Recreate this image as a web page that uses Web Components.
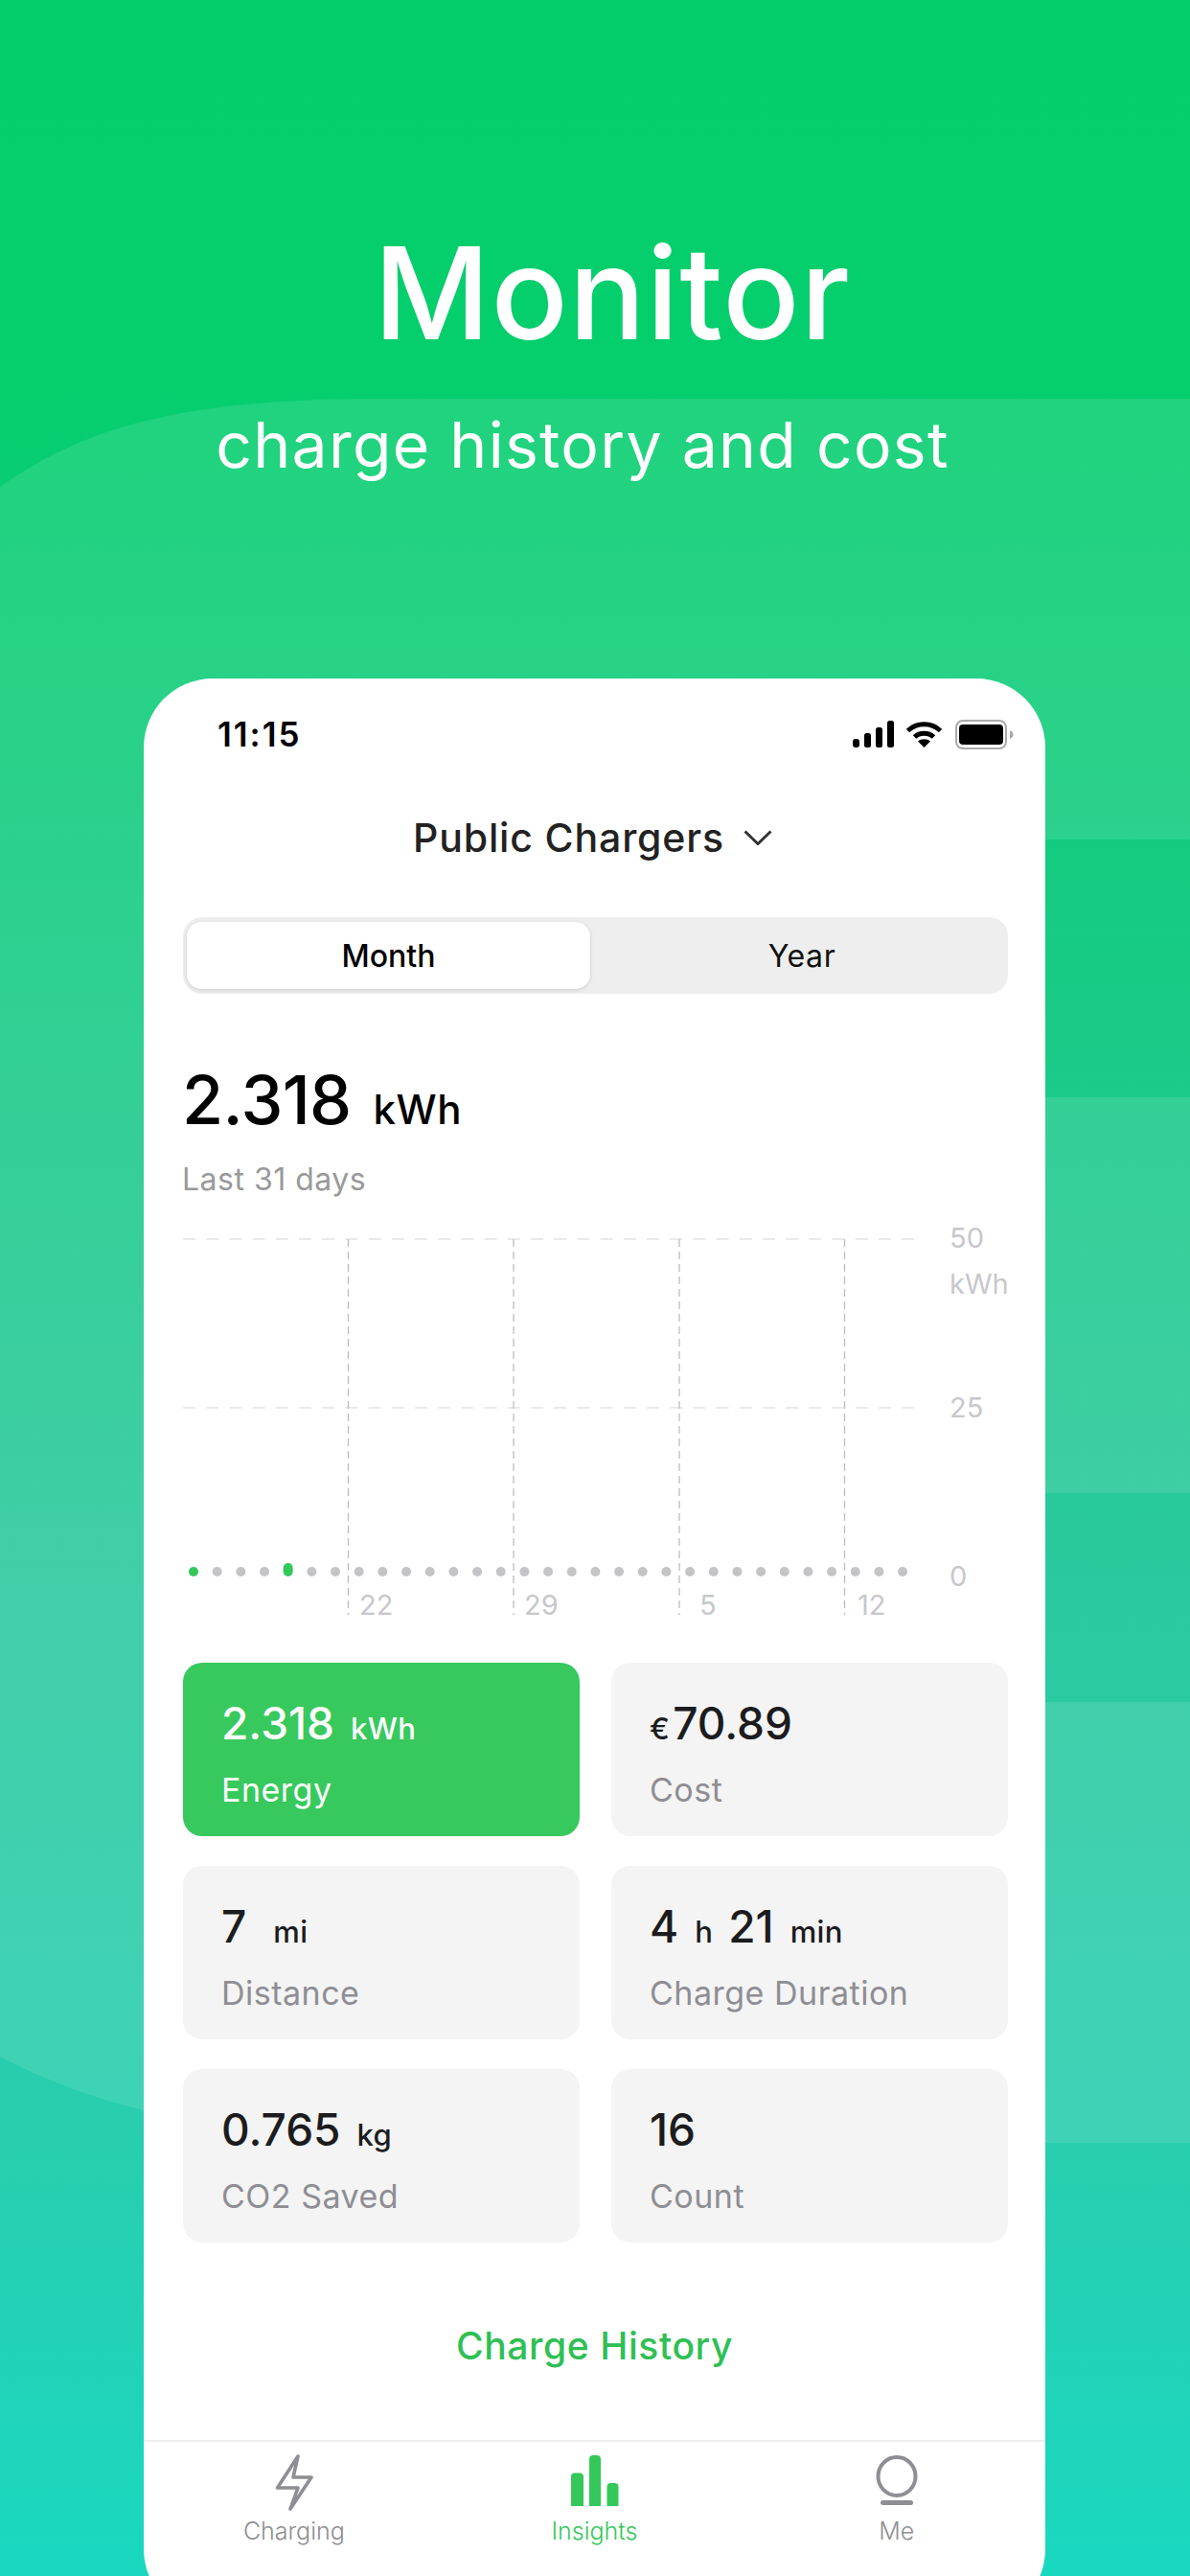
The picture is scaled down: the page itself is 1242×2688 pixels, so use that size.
<!DOCTYPE html>
<html>
<head>
<meta charset="utf-8">
<style>
  html, body { margin: 0; padding: 0; }
  body { font-family: Inter, "Noto Sans", sans-serif; }
</style>
</head>
<body>
<promo-page>
  <promo-backdrop slot="backdrop"></promo-backdrop>
  <promo-head></promo-head>
  <phone-frame>
    <status-bar></status-bar>
    <charger-picker>Public Chargers</charger-picker>
    <period-toggle></period-toggle>
    <energy-total></energy-total>
    <usage-chart></usage-chart>
    <stat-grid>
      <stat-card active><stat-num>2.318</stat-num><stat-unit>kWh</stat-unit><span slot="label">Energy</span></stat-card>
      <stat-card><stat-unit style="margin:0 3px 0 0">€</stat-unit><stat-num>70.89</stat-num><span slot="label">Cost</span></stat-card>
      <stat-card><stat-num>7</stat-num><stat-unit style="margin-left:28px">mi</stat-unit><span slot="label">Distance</span></stat-card>
      <stat-card><stat-num>4</stat-num><stat-unit>h</stat-unit><stat-num style="margin-left:16px">21</stat-num><stat-unit>min</stat-unit><span slot="label">Charge Duration</span></stat-card>
      <stat-card><stat-num>0.765</stat-num><stat-unit>kg</stat-unit><span slot="label">CO2 Saved</span></stat-card>
      <stat-card><stat-num>16</stat-num><span slot="label">Count</span></stat-card>
    </stat-grid>
    <history-link>Charge History</history-link>
    <tab-bar></tab-bar>
  </phone-frame>
</promo-page>
<script>
const FONT = 'Inter, "Noto Sans", sans-serif';

class PromoPage extends HTMLElement {
  static registerCustomElement() {
    PromoPage.template = document.createElement('template');
    PromoPage.template.innerHTML = `
      <style>
        :host {
          display: block;
          position: relative;
          width: 1242px;
          height: 2688px;
          overflow: hidden;
          background: linear-gradient(180deg, #04ce6b 0, #05ce6d 400px, #17cb84 1000px, #2bc99e 1660px, #28ceb0 2250px, #19d8c0 2688px);
        }
      </style>
      <slot name="backdrop"></slot>
      <slot></slot>
    `;
    window.customElements.define('promo-page', PromoPage);
  }
  constructor() {
    super();
    this.attachShadow({ mode: 'open' }).appendChild(PromoPage.template.content.cloneNode(true));
  }
}

class PromoBackdrop extends HTMLElement {
  static registerCustomElement() {
    PromoBackdrop.template = document.createElement('template');
    PromoBackdrop.template.innerHTML = `
      <style>
        :host { display: block; position: absolute; inset: 0; }
        svg { display: block; }
      </style>
      <svg width="1242" height="2688" viewBox="0 0 1242 2688">
        <g fill="#fff" fill-opacity=".105">
          <path d="M0 508C90 445 190 416 400 416H1242V876H0Z"/>
          <path d="M0 876H150V1145H0Z"/>
          <path d="M0 1145H1242V1558H0Z"/>
          <path d="M0 1558H150V1776H0Z"/>
          <path d="M0 1776H1242V2236H500C330 2236 150 2225 0 2146Z"/>
        </g>
      </svg>
    `;
    window.customElements.define('promo-backdrop', PromoBackdrop);
  }
  constructor() {
    super();
    this.attachShadow({ mode: 'open' }).appendChild(PromoBackdrop.template.content.cloneNode(true));
  }
}

class PromoHead extends HTMLElement {
  static registerCustomElement() {
    PromoHead.template = document.createElement('template');
    PromoHead.template.innerHTML = `
      <style>
        :host {
          display: block;
          position: relative;
          height: 708px;
          box-sizing: border-box;
          padding-top: 226px;
          color: #fff;
          text-align: center;
          font-family: ${FONT};
        }
        h1 { margin: 0 0 0 36px; font-size: 133px; line-height: 160px; font-weight: 500; letter-spacing: 1px; }
        p { margin: 33px 26px 0 0; font-size: 66px; line-height: 90px; font-weight: 400; letter-spacing: 1.3px; }
      </style>
      <h1>Monitor</h1>
      <p>charge history and cost</p>
    `;
    window.customElements.define('promo-head', PromoHead);
  }
  constructor() {
    super();
    this.attachShadow({ mode: 'open' }).appendChild(PromoHead.template.content.cloneNode(true));
  }
}

class PhoneFrame extends HTMLElement {
  static registerCustomElement() {
    PhoneFrame.template = document.createElement('template');
    PhoneFrame.template.innerHTML = `
      <style>
        :host {
          display: block;
          position: relative;
          width: 941px;
          height: 2024px;
          margin-left: 150px;
          border-radius: 72px;
          background: #fff;
          overflow: hidden;
          font-family: ${FONT};
        }
      </style>
      <slot></slot>
    `;
    window.customElements.define('phone-frame', PhoneFrame);
  }
  constructor() {
    super();
    this.attachShadow({ mode: 'open' }).appendChild(PhoneFrame.template.content.cloneNode(true));
  }
}

class StatusBar extends HTMLElement {
  static registerCustomElement() {
    StatusBar.template = document.createElement('template');
    StatusBar.template.innerHTML = `
      <style>
        :host {
          display: flex;
          align-items: center;
          height: 116px;
          padding: 0 33px 0 77px;
          color: #000;
        }
        .time { flex: 1; font-size: 35px; font-weight: 600; letter-spacing: 2px; }
        .wifi { margin-left: 11px; }
        .battery { margin-left: 13px; }
        svg { display: block; }
      </style>
      <span class="time">11:15</span>
      <svg width="44" height="28" viewBox="0 0 44 28">
        <rect x="0" y="19" width="7" height="9" rx="3"/>
        <rect x="12" y="13" width="7" height="15" rx="2.5"/>
        <rect x="24" y="7" width="7" height="21" rx="2.5"/>
        <rect x="36" y="0" width="7" height="28" rx="2.5"/>
      </svg>
      <svg class="wifi" width="39" height="27" viewBox="0 0 39 27">
        <path d="M2.5 9.5C12 .5 27 .5 36.5 9.5" fill="none" stroke="#000" stroke-width="5"/>
        <path d="M9.5 16C15 11 24 11 29.5 16" fill="none" stroke="#000" stroke-width="5"/>
        <path d="M13 20.5C17 17.5 22 17.5 26 20.5L19.5 27Z"/>
      </svg>
      <svg class="battery" width="61" height="31" viewBox="0 0 61 31">
        <rect x="1" y="1" width="52" height="29" rx="7" fill="none" stroke="#aaa" stroke-width="2"/>
        <rect x="4" y="5" width="46" height="21" rx="4"/>
        <path d="M57 11C59.5 12 60.5 14 60.5 15.5S59.5 19 57 20Z" fill="#aaa"/>
      </svg>
    `;
    window.customElements.define('status-bar', StatusBar);
  }
  constructor() {
    super();
    this.attachShadow({ mode: 'open' }).appendChild(StatusBar.template.content.cloneNode(true));
  }
}

class ChargerPicker extends HTMLElement {
  static registerCustomElement() {
    ChargerPicker.template = document.createElement('template');
    ChargerPicker.template.innerHTML = `
      <style>
        :host {
          display: flex;
          align-items: center;
          justify-content: center;
          gap: 20px;
          height: 100px;
          margin-left: -4px;
          color: #222;
          font-size: 41px;
          font-weight: 500;
          letter-spacing: .85px;
        }
        svg { display: block; }
      </style>
      <slot></slot>
      <svg width="30" height="16" viewBox="0 0 30 16">
        <path d="M1.5 1.5L15 14.5L28.5 1.5" fill="none" stroke="#333" stroke-width="3"/>
      </svg>
    `;
    window.customElements.define('charger-picker', ChargerPicker);
  }
  constructor() {
    super();
    this.attachShadow({ mode: 'open' }).appendChild(ChargerPicker.template.content.cloneNode(true));
  }
}

class PeriodToggle extends HTMLElement {
  static registerCustomElement() {
    PeriodToggle.template = document.createElement('template');
    PeriodToggle.template.innerHTML = `
      <style>
        :host {
          display: grid;
          grid-template-columns: 421px 1fr;
          align-items: center;
          box-sizing: border-box;
          width: 861px;
          height: 80px;
          margin: 33px 0 0 41px;
          padding: 0 0 0 4px;
          border-radius: 20px;
          background: #eee;
          color: #111;
          font-size: 32px;
          text-align: center;
        }
        .on {
          display: flex;
          align-items: center;
          justify-content: center;
          height: 70px;
          border-radius: 15px;
          background: #fff;
          box-shadow: 0 1px 4px rgba(0, 0, 0, .14);
          font-weight: 500;
          color: #000;
        }
        .off { padding-left: 6px; letter-spacing: .6px; }
      </style>
      <div class="on">Month</div>
      <div class="off">Year</div>
    `;
    window.customElements.define('period-toggle', PeriodToggle);
  }
  constructor() {
    super();
    this.attachShadow({ mode: 'open' }).appendChild(PeriodToggle.template.content.cloneNode(true));
  }
}

class EnergyTotal extends HTMLElement {
  static registerCustomElement() {
    EnergyTotal.template = document.createElement('template');
    EnergyTotal.template.innerHTML = `
      <style>
        :host { display: block; margin: 76px 0 0 40px; color: #000; }
        .row { display: flex; align-items: baseline; gap: 23px; line-height: 70px; }
        .num { font-size: 70px; font-weight: 500; letter-spacing: -.6px; }
        .unit { font-size: 42px; font-weight: 500; letter-spacing: .5px; }
        .sub { margin-top: 18px; font-size: 32px; line-height: 40px; color: #999; letter-spacing: .5px; }
      </style>
      <div class="row"><span class="num">2.318</span><span class="unit">kWh</span></div>
      <div class="sub">Last 31 days</div>
    `;
    window.customElements.define('energy-total', EnergyTotal);
  }
  constructor() {
    super();
    this.attachShadow({ mode: 'open' }).appendChild(EnergyTotal.template.content.cloneNode(true));
  }
}

class UsageChart extends HTMLElement {
  static registerCustomElement() {
    UsageChart.template = document.createElement('template');
    UsageChart.template.innerHTML = `
      <style>
        :host { display: block; width: 861px; height: 430px; margin: 19px 0 0 41px; }
        svg { display: block; }
        text { font-family: ${FONT}; font-size: 29px; fill: #c7c7cc; }
      </style>
      <svg width="861" height="430" viewBox="0 0 861 430"></svg>
    `;
    window.customElements.define('usage-chart', UsageChart);
  }
  constructor() {
    super();
    const shadowRoot = this.attachShadow({ mode: 'open' });
    shadowRoot.appendChild(UsageChart.template.content.cloneNode(true));
    const grid = [23, 199].map(y =>
      `<line x1="0" y1="${y}" x2="763" y2="${y}" stroke="#eaeaea" stroke-width="2" stroke-dasharray="13 11.2"/>`);
    const ticks = [172.5, 345, 518, 690.5].map(x =>
      `<line x1="${x}" y1="23" x2="${x}" y2="415" stroke="#bdbdc0" stroke-width="1.3" stroke-dasharray="8 5"/>`);
    const dots = Array.from({ length: 31 }, (_, i) => {
      const x = 11 + i * 24.67;
      if (i === 4) { return `<rect x="${x - 5}" y="361" width="10" height="14" rx="5" fill="#34c85a"/>`; }
      return `<circle cx="${x}" cy="370" r="5" fill="${i === 0 ? '#34c85a' : '#c4c4c7'}"/>`;
    });
    const labels = [[184, 415, '22'], [356, 415, '29'], [539, 415, '5'], [704, 415, '12'],
      [800, 32, '50'], [800, 80, 'kWh'], [800, 209, '25'], [800, 385, '0']]
      .map(([x, y, text]) => `<text x="${x}" y="${y}">${text}</text>`);
    shadowRoot.querySelector('svg').innerHTML = [...grid, ...ticks, ...dots, ...labels].join('');
  }
}

class StatGrid extends HTMLElement {
  static registerCustomElement() {
    StatGrid.template = document.createElement('template');
    StatGrid.template.innerHTML = `
      <style>
        :host {
          display: grid;
          grid-template-columns: 414px 414px;
          grid-auto-rows: 181px;
          column-gap: 33px;
          row-gap: 31px;
          margin: 35px 0 0 41px;
        }
      </style>
      <slot></slot>
    `;
    window.customElements.define('stat-grid', StatGrid);
  }
  constructor() {
    super();
    this.attachShadow({ mode: 'open' }).appendChild(StatGrid.template.content.cloneNode(true));
  }
}

class StatCard extends HTMLElement {
  static registerCustomElement() {
    StatCard.template = document.createElement('template');
    StatCard.template.innerHTML = `
      <style>
        :host {
          display: block;
          box-sizing: border-box;
          padding: 38px 0 0 40px;
          border-radius: 20px;
          background: #f4f4f4;
          color: #1c1c1e;
        }
        :host([active]) { background: #37c95d; color: #fff; }
        .value { display: flex; align-items: baseline; height: 50px; line-height: 50px; }
        .label { margin-top: 23px; font-size: 34px; line-height: 44px; color: #8e8e93; letter-spacing: .5px; }
        :host([active]) .label { color: #fff; }
      </style>
      <div class="value"><slot></slot></div>
      <div class="label"><slot name="label"></slot></div>
    `;
    window.customElements.define('stat-card', StatCard);
  }
  constructor() {
    super();
    this.attachShadow({ mode: 'open' }).appendChild(StatCard.template.content.cloneNode(true));
  }
}

class StatNum extends HTMLElement {
  static registerCustomElement() {
    StatNum.template = document.createElement('template');
    StatNum.template.innerHTML = `
      <style>
        :host { display: inline-block; font-size: 46px; font-weight: 500; letter-spacing: 0; }
      </style>
      <slot></slot>
    `;
    window.customElements.define('stat-num', StatNum);
  }
  constructor() {
    super();
    this.attachShadow({ mode: 'open' }).appendChild(StatNum.template.content.cloneNode(true));
  }
}

class StatUnit extends HTMLElement {
  static registerCustomElement() {
    StatUnit.template = document.createElement('template');
    StatUnit.template.innerHTML = `
      <style>
        :host { display: inline-block; margin-left: 17px; font-size: 31px; font-weight: 500; letter-spacing: .4px; }
      </style>
      <slot></slot>
    `;
    window.customElements.define('stat-unit', StatUnit);
  }
  constructor() {
    super();
    this.attachShadow({ mode: 'open' }).appendChild(StatUnit.template.content.cloneNode(true));
  }
}

class HistoryLink extends HTMLElement {
  static registerCustomElement() {
    HistoryLink.template = document.createElement('template');
    HistoryLink.template.innerHTML = `
      <style>
        :host {
          display: flex;
          align-items: center;
          justify-content: center;
          box-sizing: border-box;
          height: 206px;
          padding-top: 9px;
          color: #2fbf55;
          font-size: 39px;
          font-weight: 500;
          letter-spacing: .6px;
        }
      </style>
      <slot></slot>
    `;
    window.customElements.define('history-link', HistoryLink);
  }
  constructor() {
    super();
    this.attachShadow({ mode: 'open' }).appendChild(HistoryLink.template.content.cloneNode(true));
  }
}

class TabBar extends HTMLElement {
  static registerCustomElement() {
    TabBar.template = document.createElement('template');
    TabBar.template.innerHTML = `
      <style>
        :host {
          display: grid;
          grid-template-columns: repeat(3, 1fr);
          border-top: 2px solid #eee;
          padding-top: 12px;
          color: #8e8e93;
          font-size: 25px;
          text-align: center;
        }
        .tab { display: flex; flex-direction: column; align-items: center; gap: 6px; line-height: 30px; font-weight: 300; }
        .on { color: #34c85a; }
        .on svg { margin-left: 2px; }
        .me { padding-left: 3px; }
        svg { display: block; }
      </style>
      <div class="tab">
        <svg width="44" height="60" viewBox="0 0 44 60">
          <path d="M26 3L4.500 36H26L18 58L40 25H21Z" fill="none" stroke="#8e8e93" stroke-width="3.600" stroke-linejoin="round"/>
        </svg>
        <span>Charging</span>
      </div>
      <div class="tab on">
        <svg width="52" height="60" viewBox="0 0 52 60">
          <path d="M1 24.500a4 4 0 0 1 4-4h5a4 4 0 0 1 4 4V55H1ZM20 6a4 4 0 0 1 4-4h4a4 4 0 0 1 4 4V55H20ZM38.500 35a4 4 0 0 1 4-4h4a4 4 0 0 1 4 4V55h-12Z" fill="#34c85a"/>
        </svg>
        <span>Insights</span>
      </div>
      <div class="tab me">
        <svg width="48" height="60" viewBox="0 0 48 60">
          <ellipse cx="24" cy="24" rx="19.500" ry="20" fill="none" stroke="#8e8e93" stroke-width="4"/>
          <rect x="7" y="49" width="34" height="5" rx="2.500" fill="#8e8e93"/>
        </svg>
        <span>Me</span>
      </div>
    `;
    window.customElements.define('tab-bar', TabBar);
  }
  constructor() {
    super();
    this.attachShadow({ mode: 'open' }).appendChild(TabBar.template.content.cloneNode(true));
  }
}

[PromoPage, PromoBackdrop, PromoHead, PhoneFrame, StatusBar, ChargerPicker, PeriodToggle, EnergyTotal, UsageChart,
  StatGrid, StatCard, StatNum, StatUnit, HistoryLink, TabBar].forEach(x => x.registerCustomElement());
</script>
</body>
</html>
